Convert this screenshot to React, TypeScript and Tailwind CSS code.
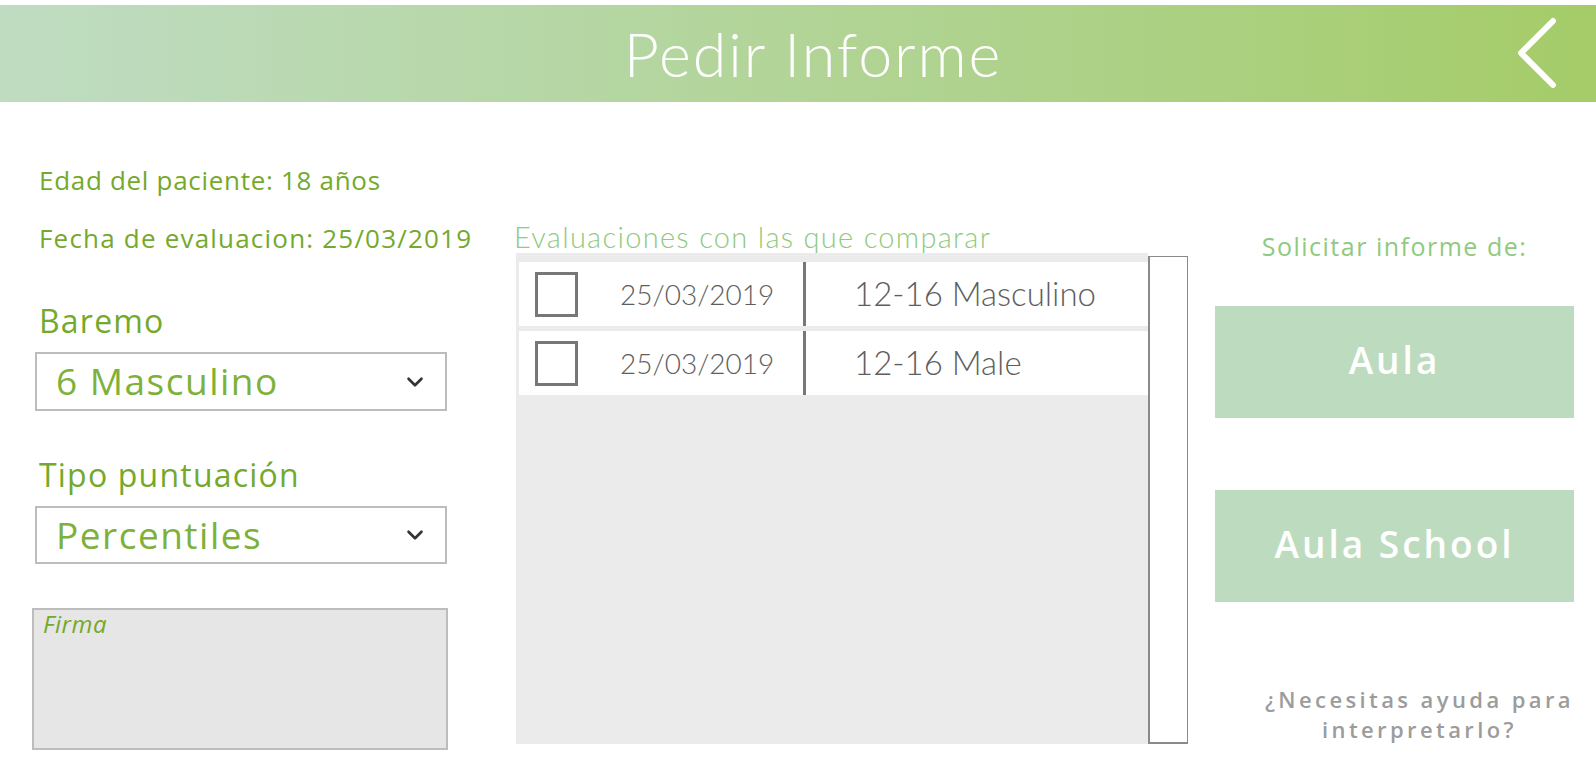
import { ChevronDown } from 'lucide-react';

const evaluations = [
  { date: '25/03/2019', label: '12-16 Masculino' },
  { date: '25/03/2019', label: '12-16 Male' },
];

function Select({ value }: { value: string }) {
  return (
    <div className="ml-[3px] w-[412px] h-full flex items-center justify-between border-2 border-[#bdbdbd] bg-white pl-[19px] pr-[17px]">
      <span className="text-[37px] leading-none text-[#7db13a] tracking-[1.5px] pb-[2px]">{value}</span>
      <ChevronDown className="w-[26px] h-[26px] text-[#333]" strokeWidth={2.4} />
    </div>
  );
}

export default function App() {
  return (
    <div className="w-full h-[777px] bg-white overflow-hidden font-['Open_Sans',sans-serif]">
      {/* header */}
      <div className="mt-[5px] h-[97px] relative flex items-center justify-center pl-[30px] bg-gradient-to-r from-[#bfdcc2] to-[#a5cc68]">
        <h1 className="font-['Lato',sans-serif] font-light text-[61px] leading-none text-white tracking-[1.9px]">
          Pedir Informe
        </h1>
        <svg
          className="absolute right-[36px] top-[8px]"
          width="44"
          height="76"
          viewBox="0 0 44 76"
          fill="none"
          stroke="white"
          strokeWidth="6"
          strokeLinecap="round"
          strokeLinejoin="round"
        >
          <path d="M37 8 L5 40 L37 72" />
        </svg>
      </div>

      <div className="flex">
        {/* left column */}
        <div className="ml-[32px] w-[416px] flex flex-col">
          <p className="mt-[63px] pl-[7px] text-[26px] leading-[31px] text-[#74a92c] tracking-[0.7px] whitespace-nowrap">
            Edad del paciente: 18 años
          </p>
          <p className="mt-[27px] pl-[7px] text-[26px] leading-[31px] text-[#74a92c] tracking-[1.2px] whitespace-nowrap">
            Fecha de evaluacion: 25/03/2019
          </p>
          <p className="mt-[49px] pl-[7px] text-[32px] leading-[36px] text-[#74a92c] tracking-[1.2px]">
            Baremo
          </p>
          <div className="mt-[13px] h-[59px]">
            <Select value="6 Masculino" />
          </div>
          <p className="mt-[46px] pl-[7px] text-[32px] leading-[36px] text-[#74a92c] tracking-[1.2px]">
            Tipo puntuación
          </p>
          <div className="mt-[13px] h-[58px]">
            <Select value="Percentiles" />
          </div>
          <div className="mt-[44px] h-[142px] border-2 border-[#bdbdbd] bg-[#e6e6e6] pl-[9px]">
            <span className="italic text-[24px] leading-[28px] text-[#74a92c] tracking-[0.5px]">Firma</span>
          </div>
        </div>

        {/* middle column */}
        <div className="ml-[66px] w-[674px] flex flex-col">
          <p className="mt-[122px] font-['Lato',sans-serif] font-light text-[29px] leading-[26px] text-[#8fca7e] tracking-[1.3px] whitespace-nowrap">
            Evaluaciones con las que comparar
          </p>
          <div className="mt-[3px] ml-[2px] flex h-[491px]">
            <div className="w-[632px] bg-[#ebebeb] pt-[9px] pl-[3px] flex flex-col gap-[5px]">
              {evaluations.map((ev, i) => (
                <div key={i} className="h-[64px] w-[629px] bg-white flex items-stretch">
                  <div className="flex items-center pl-[16px]">
                    <div className="w-[43px] h-[45px] border-[3px] border-[#777]" />
                  </div>
                  <div className="w-[225px] flex items-center pl-[42px] font-['Lato',sans-serif] font-light text-[28px] text-[#5e5e5e]">
                    {ev.date}
                  </div>
                  <div className="w-[3px] bg-[#777]" />
                  <div className="flex items-center pl-[48px] font-['Lato',sans-serif] font-light text-[33px] text-[#5e5e5e]">
                    {ev.label}
                  </div>
                </div>
              ))}
            </div>
            <div className="mt-[3px] w-[40px] h-[488px] bg-white border border-[#8a8a8a] border-l-2 border-b-2" />
          </div>
        </div>

        {/* right column */}
        <div className="ml-[27px] w-[359px] flex flex-col">
          <p className="mt-[129px] text-center text-[25px] leading-[31px] text-[#8fca7e] tracking-[1.5px] whitespace-nowrap">
            Solicitar informe de:
          </p>
          <button className="mt-[44px] h-[112px] pb-[5px] bg-[#bddcbf] text-white text-[37px] font-semibold tracking-[3px]">
            Aula
          </button>
          <button className="mt-[72px] h-[112px] pb-[5px] bg-[#bddcbf] text-white text-[37px] font-semibold tracking-[3px]">
            Aula School
          </button>
          <p className="mt-[82px] self-end text-center text-[22px] leading-[30px] font-semibold text-[#9c9c9c] tracking-[3.4px] whitespace-nowrap">
            ¿Necesitas ayuda para
            <br />
            interpretarlo?
          </p>
        </div>
      </div>
    </div>
  );
}
